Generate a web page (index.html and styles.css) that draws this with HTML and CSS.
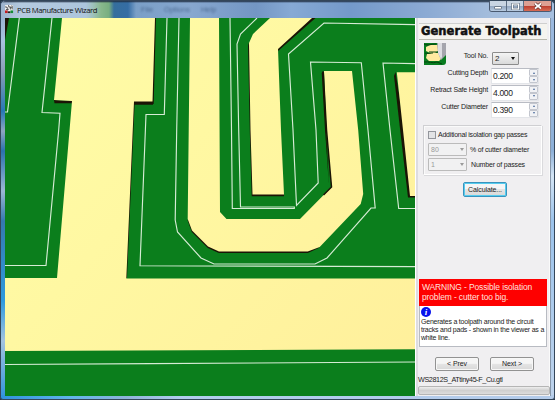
FILE: index.html
```html
<!DOCTYPE html>
<html lang="en">
<head>
<meta charset="utf-8">
<title>PCB Manufacture Wizard</title>
<link rel="stylesheet" href="styles.css">
</head>
<body>
<div class="window">
  <header class="titlebar">
    <svg class="app-icon" width="10" height="10" viewBox="0 0 10 10"><path fill="#f4f4f4" d="M0 0h9v9H0z"/><path d="M1 1v2h2v3M4 0v2h2v3M7 1h1v4M1 5h3M5 3h3" fill="none" stroke="#555"/><path fill="#c51b20" d="M0 6h3v3H0z"/><path fill="#222" d="M3 7h3v2H3z"/><path fill="#128a35" d="M6 6h3v3H6z"/></svg>
    <span class="caption">PCB Manufacture Wizard</span>
    <div class="ghost"><span>File</span><span>Options</span><span>Help</span></div>
    <div class="controls">
      <span class="control"><svg width="9" height="7"><rect x=".5" y="3.5" width="7" height="2.5" rx=".5" fill="#fff" stroke="#596879" stroke-width=".8"/></svg></span>
      <span class="control"><svg width="9" height="7"><rect x="1.5" y="1" width="6" height="5" fill="none" stroke="#596879" stroke-width="2.4"/><rect x="1.5" y="1" width="6" height="5" fill="none" stroke="#fff" stroke-width="1.2"/></svg></span>
      <span class="control close"><svg width="10" height="8"><path d="M2 1.5l6 5M8 1.5l-6 5" stroke="#63302c" stroke-width="3.2"/><path d="M2 1.5l6 5M8 1.5l-6 5" stroke="#fff" stroke-width="1.7"/></svg></span>
    </div>
  </header>
  <main class="content">
    <svg class="board" width="410" height="378" viewBox="5 18 410 378">
      <defs><linearGradient id="copper" gradientUnits="userSpaceOnUse" x1="5" y1="18" x2="415" y2="396"><stop offset="0" stop-color="#fffda8"/><stop offset=".4" stop-color="#fff8a2"/><stop offset="1" stop-color="#ffef9b"/></linearGradient></defs>
      <path fill="#0b7e1c" d="M5 18h410v378H5z"/>
      <g fill="#1b1405">
        <path d="M5 18h4L5 40zM54 100l18 1v2.3H54.500zM134 101h19v3.700H134.600L127 278H125.600L133 101zM154 18h2L153.700 104h-1.500z"/>
        <path d="M248.300 43l-.3 1 1.900 91 1.800 61.300H284v-2zM277.500 48v3.500l38-33.500h-4z"/>
        <path d="M323 71l-1.300 2 3.300 57 4 56M355 71"/>
        <path d="M187.500 220l4.300 12 16 16 11 4.900h89l12-5.500z"/>
        <path d="M395.500 72l-1.500 4 6.500 57 7.500 64.500H415v-3z"/>
      </g>
      <g fill="url(#copper)">
        <path d="M62 18h93l-2.500 83.500H134L126.300 278.400H415V349.300L5 351V278H57L72 101 54 100z"/>
        <path d="M190 18h29l1 194 6.500 7H300l31.500-32-5-57L324 71h28l6.200 59 5 64-2.500 10-41 43-12 4.500H219l-11-5-16-16-4.300-11.500z"/>
        <path d="M270 18h42l-34 31 3 81 3 64.500H252.500L250.500 130 249 43l4-9z"/>
        <path d="M396.800 72.300H415V196h-5l-7-66z"/>
      </g>
      <path class="edge" d="M323.200 71.500l3.300 58.500 5 57-8 8"/>
      <g class="trace">
        <path d="M19.300 18L7.500 112H5M52 18L42 112.500l18 .800-1.300 16.700L46 265.500H5"/>
        <path d="M167 18l-2.700 96.500H146L140 265.800l275 .900M5 364.500L150 363.600 415 362"/>
        <path d="M179 18l-2.300 112-1.500 90 2.300 12L201 258l13 6H315l12-6 44-50h4.200L368 130 361.300 62.700 310.500 62l5.500 68 2.200 53L296.500 205.500 293 130 288.500 54 324 23l91 1.700"/>
        <path d="M230 18l1.500 112 .800 78.500h62V207H240.500L238.700 130 237 44l3.500-10L257 18"/>
        <path d="M415 63.700L383 63l7 67 8.700 78.500H415"/>
      </g>
    </svg>
    <section class="panel">
      <h1 class="heading">Generate Toolpath</h1>
      <div class="tool-row">
        <svg class="thumb" width="22" height="22" viewBox="0 0 22 22"><path fill="#087c20" d="M0 0h22v22H0z"/><path fill="#ffeaa0" d="M2 4l4-2h8v6l-3 2H6L2 8zM3 11l4-1h9l2 5-3 3H5l-3-3z"/><path d="M0 1c4 2 7 0 12 0M5 9h9M1 10c5 1 6 0 8 0M0 19c5-1 8 2 13 0l5 2" fill="none" stroke="#05440e"/><path fill="#a5a5ad" d="M13 0h9v12l-5 5-3-7z"/><path fill="#dddde2" d="M14 0h4v14l-1 2-3-6z"/></svg>
        <label class="label tool-label">Tool No.</label>
        <div class="select tool-select"><span>2</span><i class="arrow"></i></div>
      </div>
      <div class="field"><label class="label">Cutting Depth</label><div class="spin"><span class="num">0.200</span><span class="steps"><i class="up"></i><i class="down"></i></span></div></div>
      <div class="field"><label class="label">Retract Safe Height</label><div class="spin"><span class="num">4.000</span><span class="steps"><i class="up"></i><i class="down"></i></span></div></div>
      <div class="field"><label class="label">Cutter Diameter</label><div class="spin"><span class="num">0.390</span><span class="steps"><i class="up"></i><i class="down"></i></span></div></div>
      <div class="group">
        <div class="check"><i class="box"></i><span class="label">Additional isolation gap passes</span></div>
        <div class="option"><div class="select disabled"><span>80</span><i class="arrow"></i></div><span class="label">% of cutter diameter</span></div>
        <div class="option"><div class="select disabled"><span>1</span><i class="arrow"></i></div><span class="label indent">Number of passes</span></div>
      </div>
      <div class="button calculate">Calculate...</div>
      <div class="info">
        <p class="warning">WARNING - Possible isolation<br>problem - cutter too big.</p>
        <div class="help">
          <span class="badge">i</span>
          <p class="description">Generates a toolpath around the circuit<br>tracks and pads - shown in the viewer as a<br>white line.</p>
        </div>
      </div>
      <div class="nav"><div class="button">&lt; Prev</div><div class="button">Next &gt;</div></div>
      <div class="filename">WS2812S_ATtiny45-F_Cu.gtl</div>
      <div class="progress"></div>
    </section>
  </main>
</div>
</body>
</html>
```
FILE: styles.css
```css
* { box-sizing: border-box; }
html, body { margin: 0; width: 555px; height: 400px; overflow: hidden; background: #26384a; }
body { font-family: "Liberation Sans", Arial, sans-serif; color: #222; }
p, h1 { margin: 0; }
i { font-style: normal; }
svg { display: block; }

.window {
  width: 555px; height: 400px; padding: 0 3px 3px 4px; display: flex; flex-direction: column;
  border: 1px solid #34465a; border-radius: 5px 5px 3px 3px;
  background:
    linear-gradient(90deg, #2f92dc, #62b5eb 70px, #8fb3d9 125px, #b3cdee 180px, #b3cbea) 0 100% / 100% 4px no-repeat,
    linear-gradient(#8ea9c7, #a9c3df 40px, #8b9eb8 70px, #2778b5 110px, #8ea5c0 130px, #2b71ad 150px, #9bb7d4 190px, #3578ae 220px, #2f9ade 300px, #a5c3df 340px, #2f92dc) 0 0 / 5px 100% no-repeat,
    linear-gradient(#9ebbe0, #8db0d8 150px, #d4e5f5 175px, #9cc3eb 220px, #bed3ec) 100% 0 / 5px 100% no-repeat,
    #a9c4e6;
}
.titlebar {
  height: 17px; margin: 0 -3px 0 -4px; padding: 0 3px 0 4px; flex: none;
  display: flex; align-items: center; border-radius: 5px 5px 0 0;
  background:
    linear-gradient(#1e2c40 0, #1e2c4000 2px, transparent),
    linear-gradient(90deg, #9cb2cc 0, #b5cae0 20px, #adc5dc 85px, #9ec1ba 92px, #88b88c 100px, #78ae80 108px, #356e9d 113px, #356da4 127px, #7a9fc7 135px, #87a7cf 190px, #7396c4 255px, #86a9d4 290px, #7499ca 350px, #8dabd4 430px, #a4bddc 490px, #a5bfdf);
}
.app-icon { flex: none; width: 9px; height: 9px; }
.caption { width: 104px; margin-left: 3px; font: 7.700px/12px "Open Sans", sans-serif; letter-spacing: -.42px; color: #111; white-space: nowrap; }
.ghost { display: flex; gap: 11px; margin-left: 20px; font-size: 7.500px; color: #304b70; filter: blur(1.2px); opacity: .65; }
.controls { align-self: flex-start; display: flex; width: 63px; height: 11px; margin: 0 -1px 0 auto; border: 1px solid #4a5a70; border-top: 0; border-radius: 0 0 3px 3px; overflow: hidden; }
.control { width: 17px; display: flex; align-items: center; justify-content: center; background: linear-gradient(#c9d5e3 45%, #91a5bf 50%, #b8cbe1); border-right: 1px solid #5b6c82; }
.close { flex: 1; border: 0; background: linear-gradient(#dda094 45%, #bd3d2e 50%, #d66c55); }

.content { display: flex; width: 547px; height: 378px; flex: none; }
.board { flex: none; }
.trace path { fill: none; stroke: #d6ecd5; stroke-width: 1.15; }
.edge { fill: none; stroke: #1b1405; stroke-width: 1.5; }

.panel { width: 136px; height: 378px; padding: 5px 3px 1px; display: flex; flex-direction: column; background: #f0eff1; border-left: 1px solid #fff; box-shadow: inset 2px 0 #dddce1, inset -1px 0 #8797aa, inset -2px 0 #fafafa; }
.heading { width: 128px; height: 17px; flex: none; background: #f5f4ef; border-top: 1px solid #cfcfcf; border-bottom: 1px solid #b9b9ae; padding-left: 2px; font: bold 11.500px/14px "DejaVu Sans", sans-serif; letter-spacing: .05px; -webkit-text-stroke: .5px #111; color: #111; white-space: nowrap; }
.label { font-size: 7px; line-height: 9px; letter-spacing: -.18px; color: #222; white-space: nowrap; }
.tool-row { display: flex; height: 26px; padding: 3px 0 0 5px; flex: none; }
.thumb { flex: none; border-radius: 0 0 3px; }
.tool-label { width: 42px; margin-top: 8px; text-align: right; }
.select { display: flex; align-items: center; justify-content: space-between; border: 1px solid #8c8c8c; border-radius: 1px; background: linear-gradient(#f4f4f4, #e7e7e7 50%, #dadada); font-size: 8px; }
.tool-select { width: 27px; height: 13px; margin: 9px 0 0 4px; padding: 0 3px 0 2px; }
.arrow { border: 2.5px solid transparent; border-top: 3px solid #111; border-bottom: 0; }
.field { display: flex; justify-content: flex-end; height: 16.800px; padding-right: 9px; flex: none; }
.field .label { margin: -1px 3px 0 0; }
.tool-row + .field { margin-top: 3px; }
.spin { width: 48px; height: 16px; margin-top: -1px; display: flex; align-items: center; justify-content: space-between; background: #fff; border: 1px solid #e3e5e9; border-top-color: #b9bcc4; }
.num { padding-left: 1px; font-size: 8.500px; line-height: 12px; letter-spacing: -.35px; }
.steps { display: flex; flex-direction: column; }
.steps i { display: flex; width: 9px; height: 7px; align-items: center; justify-content: center; border: 1px solid #c3c6ce; border-radius: 1px; background: #f1f2f5; }
.steps i::after { content: ""; border: 1.5px solid transparent; }
.steps .up::after { border-bottom: 2px solid #48699a; border-top: 0; }
.steps .down::after { border-top: 2px solid #48699a; border-bottom: 0; }

.group { width: 119px; height: 50px; margin: 6px 0 0 4px; flex: none; border: 1px solid #cfcfd2; border-right-color: #fff; border-bottom-color: #fff; box-shadow: inset 1px 1px #fafafa, 1px 1px #dadadd; padding: 4px 0 0 4px; }
.check { display: flex; align-items: center; height: 9px; gap: 2px; }
.box { width: 8px; height: 8px; border: 1px solid #93969c; background: #e2e3e5; }
.check .label { letter-spacing: -.22px; }
.option { display: flex; align-items: center; height: 13px; margin-top: 4px; gap: 3px; }
.option + .option { margin-top: 2px; }
.disabled { width: 39px; height: 13px; padding: 0 2px; font-size: 7px; color: #999; border-color: #bbb; background: #f1f1f2; }
.disabled .arrow { border-top-color: #9b9b9b; }
.indent { padding-left: 1px; }
.button { width: 44px; height: 14px; border: 1px solid #929292; border-radius: 2px; background: linear-gradient(#f5f5f5 45%, #e4e4e4 50%, #d8d8d8); box-shadow: inset 0 0 0 1px #f7f7f7; text-align: center; font-size: 7px; line-height: 12px; letter-spacing: -.1px; flex: none; }
.calculate { margin: 7px 0 0 44px; height: 15px; line-height: 13px; border-color: #3a93bd; box-shadow: inset 0 0 0 1px #56cdef; }
.info { width: 128px; height: 68px; margin-top: auto; flex: none; background: #fff; border: 1px solid #b8bbc2; }
.warning { width: 128px; height: 27px; margin: -1px -1px 0; padding: 3px 0 0 3px; background: #fe0000; color: #ffe1df; font-size: 8.500px; line-height: 10px; white-space: nowrap; letter-spacing: -.14px; }
.help { padding: 1px 0 0 1px; }
.badge { display: block; width: 10px; height: 10px; border-radius: 50%; background: #0712ec; color: #fff; font: italic bold 9px/10px "Liberation Serif", serif; text-align: center; }
.description { margin-top: 1px; font-size: 7px; line-height: 8px; white-space: nowrap; letter-spacing: -.22px; }
.nav { display: flex; gap: 11px; margin: 10px 0 0 16px; flex: none; }
.filename { height: 12px; margin: 3px 0 0 -1px; font-size: 7.200px; line-height: 12px; letter-spacing: -.37px; white-space: nowrap; flex: none; }
.progress { height: 9px; margin-left: -1px; width: 132px; flex: none; border: 1px solid #b5b5b5; border-radius: 2px; background: linear-gradient(#eee, #cfcfcf 50%, #dcdcdc); }
```
